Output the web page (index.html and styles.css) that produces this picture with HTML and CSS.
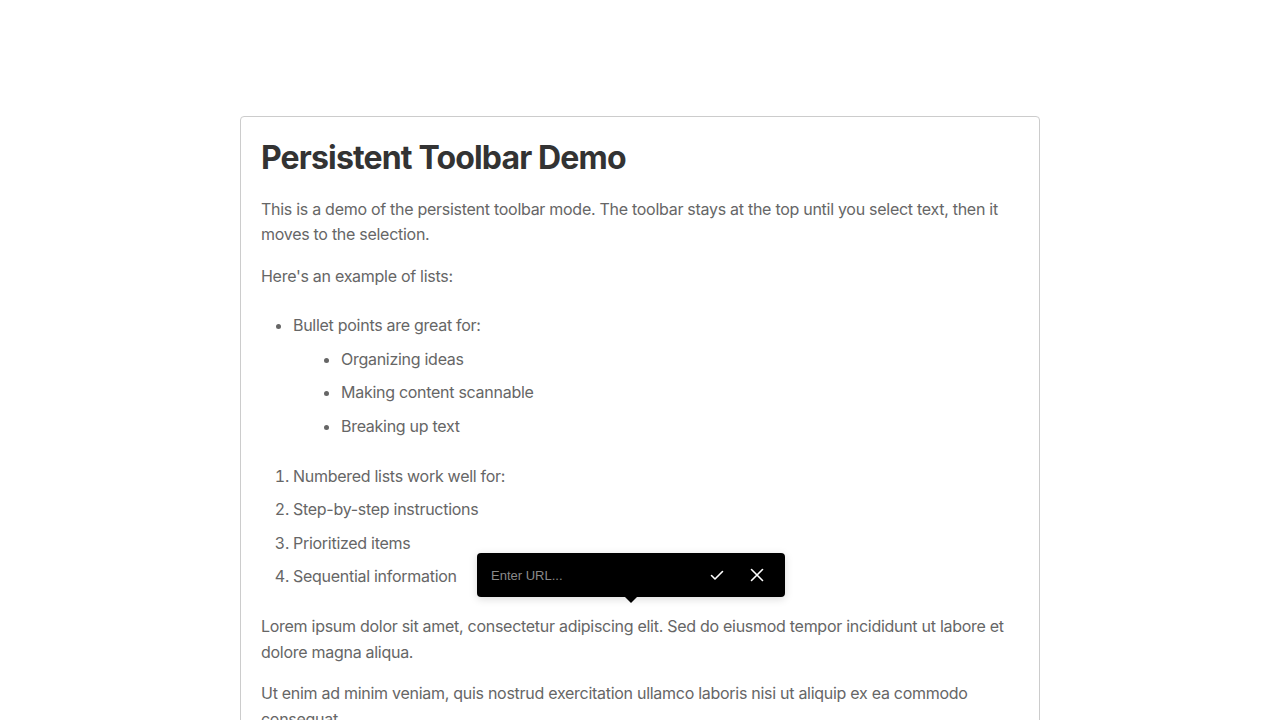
FILE: index.html
```html
<!DOCTYPE html>
<html lang="en">
<head>
<meta charset="utf-8">
<title>Persistent Toolbar Demo</title>
<link rel="stylesheet" href="styles.css">
</head>
<body>
<main class="page">
  <article class="editor">
    <h1 class="title">Persistent Toolbar Demo</h1>
    <p>This is a demo of the persistent toolbar mode. The toolbar stays at the top until you select text, then it moves to the selection.</p>
    <p>Here's an example of lists:</p>
    <ul class="list">
      <li>Bullet points are great for:
        <ul class="sublist">
          <li>Organizing ideas</li>
          <li>Making content scannable</li>
          <li>Breaking up text</li>
        </ul>
      </li>
    </ul>
    <ol class="list">
      <li>Numbered lists work well for:</li>
      <li>Step-by-step instructions</li>
      <li>Prioritized items</li>
      <li>Sequential information</li>
    </ol>
    <p>Lorem ipsum dolor sit amet, consectetur adipiscing elit. Sed do eiusmod tempor incididunt ut labore et dolore magna aliqua.</p>
    <p>Ut enim ad minim veniam, quis nostrud exercitation ullamco laboris nisi ut aliquip ex ea commodo consequat.</p>
  </article>
  <div class="link-bar">
    <input class="link-input" type="text" placeholder="Enter URL...">
    <button class="link-btn" type="button" aria-label="Apply">
      <svg width="16" height="16" viewBox="0 0 16 16" fill="none" stroke="#fff" stroke-width="1.6" stroke-linecap="round" stroke-linejoin="round"><path d="M2.5 8.5 L6 12 L13.5 4.5"/></svg>
    </button>
    <button class="link-btn" type="button" aria-label="Cancel">
      <svg width="16" height="16" viewBox="0 0 16 16" fill="none" stroke="#fff" stroke-width="1.6" stroke-linecap="round"><path d="M2.5 2.5 L13.5 13.5 M13.5 2.5 L2.5 13.5"/></svg>
    </button>
  </div>
</main>
</body>
</html>
```

FILE: styles.css
```css
html, body {
  margin: 0;
  padding: 0;
  background: #fff;
}

body {
  font-family: Inter, "Noto Sans", sans-serif;
  color: #666;
  font-size: 16px;
  line-height: 1.6;
  letter-spacing: -0.28px;
}

.page {
  position: relative;
  padding-top: 116px;
  height: 720px;
  box-sizing: border-box;
  overflow: hidden;
}

.editor {
  width: 800px;
  box-sizing: border-box;
  margin: 0 auto;
  border: 1px solid #ccc;
  border-radius: 4px;
  padding: 20px;
}

.title {
  margin: 0 0 17.5px;
  font-size: 32px;
  line-height: 42px;
  font-weight: 700;
  color: #333;
  letter-spacing: -0.85px;
}

.editor p {
  margin: 16px 0;
}

.editor .title + p {
  margin-top: 0;
}

.list {
  margin: 24px 0;
  padding-left: 32px;
}

.list li {
  margin: 8px 0;
}

.sublist {
  margin: 0;
  padding-left: 48px;
  list-style: disc;
}

.link-bar {
  position: absolute;
  left: 477px;
  top: 553px;
  width: 308px;
  height: 44px;
  box-sizing: border-box;
  background: #000;
  border-radius: 4px;
  box-shadow: 0 2px 8px rgba(0, 0, 0, 0.15);
  display: flex;
  align-items: center;
  padding: 0 8px 0 14px;
  letter-spacing: 0;
}

.link-bar::after {
  content: "";
  position: absolute;
  left: 148px;
  bottom: -6px;
  border-left: 6px solid transparent;
  border-right: 6px solid transparent;
  border-top: 6px solid #000;
}

.link-input {
  flex: 1;
  min-width: 0;
  background: transparent;
  border: none;
  outline: none;
  padding: 0;
  font-family: "Liberation Sans", Arial, sans-serif;
  font-size: 13px;
  color: #fff;
}

.link-input::placeholder {
  color: #8a8a8a;
}

.link-btn {
  width: 40px;
  height: 32px;
  display: flex;
  align-items: center;
  justify-content: center;
  background: transparent;
  border: none;
  padding: 0;
  margin: 0;
  cursor: pointer;
}
```
